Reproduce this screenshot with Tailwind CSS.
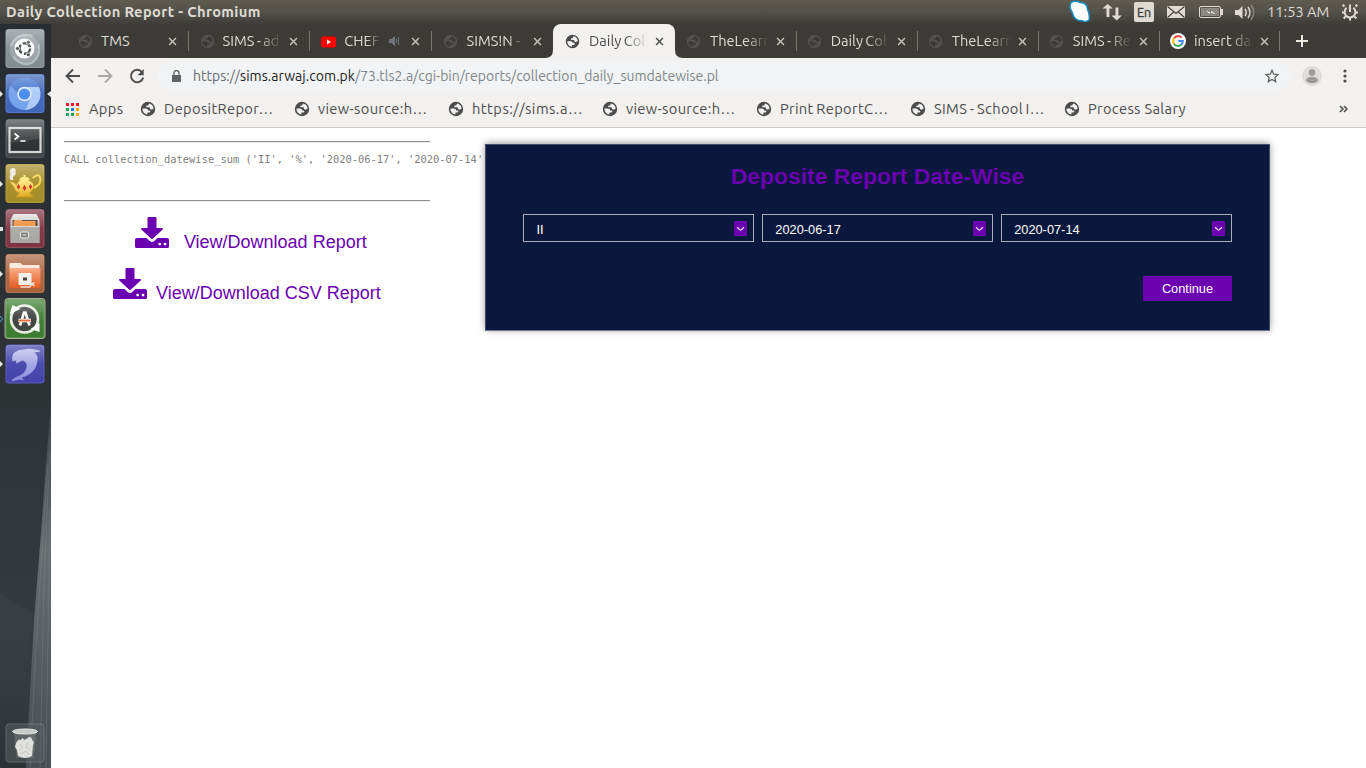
<!DOCTYPE html>
<html lang="en">
<head>
<meta charset="utf-8">
<title>Daily Collection Report</title>
<script src="https://cdn.jsdelivr.net/npm/@tailwindcss/browser@4"></script>
</head>
<body class="w-[1366px] h-[768px] overflow-hidden bg-white flex flex-col font-['Ubuntu','Noto_Sans',sans-serif] text-[14.667px] leading-none">
<svg class="hidden">
  <symbol id="globe" viewBox="0 0 16 16"><path fill="currentColor" fill-rule="evenodd" d="M8 .8a7.2 7.2 0 1 0 0 14.4A7.2 7.2 0 0 0 8 .8zM2.500 7.600h3.200c1.800 0 2.300.7 2.300 1.800h1.200c.8 0 1.100.5 1.100 1.200 0 .6-.4 1-1 1H7.400v1.900C4.400 13.100 2.200 10.600 2.500 7.600zM9.300 2.500C11.800 3 13.500 5 13.600 7.500c-.6.8-1.400 1.100-2.100 1.100-1 0-1.500-.6-1.500-1.400 0-.6-.5-.9-1.200-.9H6.900c-.5-.1-.7-.5-.7-.9 0-.7.4-1 1.100-1h.9c.3-.8.600-1.300 1.100-1.900z"/></symbol>
  <symbol id="close" viewBox="0 0 10 10"><path d="M1.200 1.200l7.600 7.600M8.800 1.200L1.200 8.800" stroke="currentColor" stroke-width="1.700" fill="none"/></symbol>
  <symbol id="download" viewBox="0 0 34 32"><path fill="currentColor" d="M13.500 0h7a1 1 0 0 1 1 1v10h5.500c1 0 1.300 1 .7 1.600L18 21.600c-.6.600-1.400.600-2 0L6.300 12.600C5.700 12 6 11 7 11h5.500V1a1 1 0 0 1 1-1z"/><path fill="currentColor" fill-rule="evenodd" d="M2 21h9.500l3.500 3.200c1.300 1.100 2.700 1.100 4 0L22.500 21H32a2 2 0 0 1 2 2v6.500a1.500 1.500 0 0 1-1.500 1.500h-31A1.500 1.500 0 0 1 0 29.500V23a2 2 0 0 1 2-2zM24.700 25.700a1.400 1.400 0 1 0 0 2.800 1.400 1.400 0 0 0 0-2.800zM30 25.700a1.400 1.400 0 1 0 0 2.800 1.400 1.400 0 0 0 0-2.800z"/></symbol>
  <symbol id="chev" viewBox="0 0 13 15"><path d="M3 6.200l2.800 2.600q.7.500 1.400 0L10 6.200" fill="none" stroke="#e8d8f2" stroke-width="1.300"/></symbol>
</svg>

<!-- system panel -->
<header class="h-6 shrink-0 flex items-center bg-linear-to-b from-[#5e5b4e] via-[#53514a] to-[#3e3d38] text-[#dfdbd2]">
  <span class="ml-[6px] font-bold whitespace-nowrap tracking-[0.37px]">Daily Collection Report - Chromium</span>
  <svg class="ml-auto w-[298px] h-6" viewBox="0 0 298 24">
    <path d="M3 2.500Q7 0 12 2.500q7 0 7.500 7 2.500 5 1.500 10.500-3 2.500-7 .8-8 0-9.500-8-4-5-1.500-10.300z" fill="#fff" stroke="#1690c9" stroke-width="1.500"/>
    <path d="M38.500 17V8.500h-4L39.700 4l5.200 4.500h-3.500V17zM47.500 7.500v8h-4l5.200 5 5.200-5h-3.500v-8z" fill="#dfdbd2"/>
    <rect x="66" y="2" width="20" height="20" rx="2" fill="#dfdbd2"/>
    <rect x="99" y="6" width="18" height="12" fill="#dfdbd2"/><path d="M99.500 6.500l8.500 7 8.500-7M99.500 17.500l6.200-5.500M116.500 17.500l-6.200-5.500" stroke="#45433d" fill="none" stroke-width="1.100"/>
    <rect x="131.500" y="6.500" width="21" height="11" rx="1.500" fill="none" stroke="#dfdbd2"/><path d="M133 8h18v8h-18z" fill="#8d8a82"/><path d="M153 9h2v6h-2z" fill="#dfdbd2"/><path d="M136 9l7 3.500V10l6 5-7-2v2z" fill="#f7f5f0" stroke="#504e47" stroke-width=".5"/>
    <path d="M167 10h3.500l4-4v13l-4-4H167z" fill="#dfdbd2"/><path d="M177 9q2.500 3.500 0 7M180 7q4 5.500 0 11" fill="none" stroke="#dfdbd2" stroke-width="1.500"/><path d="M183 5q5.500 7.500 0 15" fill="none" stroke="#8b887e" stroke-width="1.500"/>
    <g fill="none" stroke="#dfdbd2" stroke-width="2"><path d="M278.700 7.800a5.400 5.400 0 1 0 6.600 0M282 4.500V12"/><path d="M276.500 6.500l-1.800-1.800M287.500 6.500l1.800-1.800M276 12.500h-2M288 12.500h2M277.500 16.500l-1.800 2M286.500 16.500l1.800 2M282 18v2.500"/></g>
    <text x="69" y="17" font-size="12.500" fill="#3c3b37" stroke="#3c3b37" stroke-width=".3">En</text>
    <text x="199" y="17" font-size="14.667" fill="#dfdbd2">11:53 AM</text>
  </svg>
</header>

<div class="flex flex-1 min-h-0">
<!-- launcher -->
<aside class="w-[51px] shrink-0 bg-[#2d3335]">
<svg class="w-[51px] h-[744px]" viewBox="0 24 51 744">
  <defs>
    <linearGradient id="bg" x2="0" y2="1"><stop offset="0" stop-color="#272d30"/><stop offset=".5" stop-color="#2e3436"/><stop offset=".88" stop-color="#363c3f"/><stop offset="1" stop-color="#2d3235"/></linearGradient>
    <linearGradient id="edge" x2="0" y2="1"><stop offset="0" stop-color="#3d4346"/><stop offset=".4" stop-color="#686e70"/><stop offset="1" stop-color="#474d50"/></linearGradient>
    <linearGradient id="gl" x2="0" y2="1"><stop offset="0" stop-color="#fff" stop-opacity=".34"/><stop offset=".5" stop-color="#fff" stop-opacity=".06"/><stop offset="1" stop-color="#fff" stop-opacity=".02"/></linearGradient>
    <linearGradient id="haze" x2="0" y2="1"><stop offset="0" stop-color="#fff" stop-opacity=".03"/><stop offset="1" stop-color="#fff" stop-opacity="0"/></linearGradient>
    <linearGradient id="metal" x2="0" y2="1"><stop offset="0" stop-color="#e2e2df"/><stop offset="1" stop-color="#8e8e8c"/></linearGradient>
    <linearGradient id="orange" x2="0" y2="1"><stop offset="0" stop-color="#f9a37a"/><stop offset="1" stop-color="#e2571c"/></linearGradient>
    <linearGradient id="gold" x2="0" y2="1"><stop offset="0" stop-color="#fff08a"/><stop offset="1" stop-color="#e0a818"/></linearGradient>
    <linearGradient id="dol" x2="0" y2="1"><stop offset="0" stop-color="#b9bbee"/><stop offset="1" stop-color="#8588d6"/></linearGradient>
    <g id="shine"><rect x=".5" y=".5" width="38" height="38" rx="3" fill="url(#gl)" stroke="#fff" stroke-opacity=".14"/></g>
  </defs>
  <rect y="24" width="51" height="744" fill="url(#bg)"/>
  <path d="M51 405Q46 460 42 520L34 620 26 768h25z" fill="url(#edge)"/>
  <path d="M48 465l-7 100-6 100-5 103M50 450l-6 130-4 188M50 510l-4 258" fill="none" stroke="#8a9092" stroke-opacity=".3"/>
  <path d="M0 595q20 8 33 20l-6 60H0z" fill="url(#haze)"/>

  <g transform="translate(5.500 29)"><rect width="39" height="39" rx="3" fill="#7f8b8e"/><circle cx="19" cy="20" r="15" fill="#98a2a4"/><path d="M5 17Q12 3 27 7M33 15q3 12-7 19M8 28q9 11 20 5" stroke="#b4bcbe" stroke-width="2" fill="none"/><circle cx="19" cy="19.500" r="10" fill="#fff"/><circle cx="19.300" cy="19.500" r="5.300" fill="none" stroke="#444c4f" stroke-width="2.500" stroke-dasharray="9 2.100"/><g fill="#444c4f" stroke="#fff" stroke-width=".8"><circle cx="12" cy="19.500" r="2"/><circle cx="22.800" cy="13.200" r="2"/><circle cx="22.800" cy="25.800" r="2"/></g><use href="#shine"/></g>
  <g transform="translate(5.500 74)"><rect width="39" height="39" rx="3" fill="#3a63b8"/><circle cx="19" cy="20" r="16" fill="#6f9fec"/><path d="M19 20V13h14.500Q36 19 34 26q-4 9-14 10l5-12z" fill="#a9c8f8"/><path d="M5 12Q10 4 19 4q10 0 14.500 9H19q-6 0-7 6z" fill="#4275d0"/><circle cx="19" cy="20" r="7.300" fill="#dce9fd"/><circle cx="19" cy="20" r="5.600" fill="#4285ee"/><use href="#shine"/></g>
  <g transform="translate(5.500 119)"><rect width="39" height="39" rx="3" fill="#3c4043"/><rect x="4" y="9" width="31" height="24" fill="#26292b" stroke="#d4d5d3" stroke-width="2.200"/><path d="M5 10h29v10L5 24z" fill="#fff" opacity=".1"/><path d="M9 14.500l4 3-4 3M15 22h5" stroke="#fff" stroke-width="1.600" fill="none"/><use href="#shine"/></g>
  <g transform="translate(5.500 164)"><rect width="39" height="39" rx="3" fill="#a38a23"/><path d="M27 14q7-6 8 1 0 7-8 9" fill="none" stroke="#f5d248" stroke-width="2"/><path d="M4 18q4-1 7 3l2-4q5-4 12 0l3 3q1 6-4 9l4 4H10l4-4q-4-1-5-4-1-4-5-7z" fill="url(#gold)" stroke="#c38e10" stroke-width=".7"/><path d="M14 16q0-3 4-3v-2h2v2q4 0 4 3z" fill="#ffe878"/><path d="M5 16q-2-3 0-6-2-5 2-6 4 0 3 4 1 3-2 4-1 2 0 4z" fill="#eee" opacity=".9"/><path d="M13 20l1.600 2.700-1.600 2.700-1.600-2.700zM19 21l1.800 3-1.800 3-1.800-3zM25 20l1.600 2.700-1.600 2.700-1.600-2.700z" fill="#d4201d"/><use href="#shine"/></g>
  <g transform="translate(5.500 209)"><rect width="39" height="39" rx="3" fill="#7c2f3f"/><path d="M8 5h23l3 6v23H5V11z" fill="url(#metal)"/><path d="M7 11h25v7H7z" fill="#3e2a22"/><path d="M8 13l1-2h7l1 1h13v6H8z" fill="#f08c38"/><path d="M5 17h29v17H5z" fill="#a5a5a2"/><path d="M5 17.500h29" stroke="#d9d9d6"/><rect x="15" y="23" width="8" height="6" rx="1" fill="#777" stroke="#eee"/><path d="M17 26h4" stroke="#eee"/><use href="#shine"/></g>
  <g transform="translate(5.500 254)"><rect width="39" height="39" rx="3" fill="#a9603a"/><path d="M4 10q0-1 1-1h10l2 2h17v4H4z" fill="#fbe5d8"/><path d="M4 14h31v18q0 2-2 2H6q-2 0-2-2z" fill="url(#orange)"/><rect x="13" y="19" width="13" height="12" rx="1" fill="#f2efea"/><rect x="17.500" y="23.500" width="4" height="3" fill="#3b3530"/><path d="M15 33h9q3-4 5-1M24 30l5-1" stroke="#e9e4dd" stroke-width="1.500" fill="none"/><use href="#shine"/></g>
  <g transform="translate(5.500 299)"><rect x="-1" y="-1" width="41" height="41" rx="4" fill="#dfe5c8" opacity=".7"/><rect width="39" height="39" rx="3" fill="#377a2b"/><circle cx="19" cy="20" r="12" fill="#3b3d3b"/><circle cx="19" cy="20" r="13.500" fill="none" stroke="#ecece6" stroke-width="2.600"/><path d="M4 15l3-9 8 4zM34 24v9l-9-3z" fill="#fff"/><path d="M14.500 26.500l4-13h1.500l4 13" fill="none" stroke="#f6f6f2" stroke-width="2.600"/><path d="M13 21.500h12.500" stroke="#f6f6f2" stroke-width="3.600"/><path d="M13.500 21.500h11.500" stroke="#e8632a" stroke-width="1.800"/><use href="#shine"/></g>
  <g transform="translate(5.500 344.500)"><rect width="39" height="39" rx="3" fill="#3e40a9"/><path d="M8 9q4-4 10-4 6-2 16 1l1 1-6 1q4 3 3 8-1 8-6 12-4 4-10 5l3 3-5-1-8 2q1-3 6-5 8-3 9-9 1-4-2-6l-2-1-6 3-1-3-3 1q-1-5 1-8z" fill="url(#dol)"/><use href="#shine"/></g>
  <g transform="translate(6 724)"><rect width="38" height="38" rx="3" fill="#5a6062" opacity=".55" stroke="#888d8f"/><path d="M8 9h22l-2.500 25h-17z" fill="#9a9d9b" opacity=".3"/><path d="M10 19q3-5 5-3 2-4 3 0 3-1 5-3 3 0 3 3 3 2 1 5l-1 11q-7 4-14 0l-1-6-2-3z" fill="#dfe0dd"/><path d="M14 20l3 3-3 3M22 18l-2 5 4 3M15 30l5-3 3 4" stroke="#c6c8c6" fill="none"/><ellipse cx="19" cy="7.500" rx="12.500" ry="2.500" fill="#c9cbc8" stroke="#e8e9e6"/></g>
  <path d="M0 91l3 3-3 3zM0 181l3 3-3 3zM0 271l3 3-3 3zM0 361l3 3-3 3zM51 91l-4 3 4 3zM0 227h3v4H0z" fill="#e4e4e0"/>
  <path d="M0 316l2.500 3L0 322" fill="none" stroke="#5da6cf"/>
</svg>
</aside>

<div class="flex-1 min-w-0 flex flex-col">
<!-- tabs -->
<nav class="h-[34px] shrink-0 bg-[#3c3b37] flex items-stretch pl-4 text-[#dfdbd2]">
  <div class="w-[120.500px] flex items-center pl-[11px] pr-[11px] relative"><svg class="w-[15px] h-[15px] text-[#53524f]"><use href="#globe"/></svg><span class="ml-2 w-[59px] overflow-hidden whitespace-nowrap h-5 leading-5">TMS</span><svg class="w-[9px] h-[9px] ml-[7.500px] text-[#c3c0b8]"><use href="#close"/></svg></div>
  <div class="w-[121.850px] flex items-center pl-[12px] relative"><i class="absolute left-0 top-[7px] w-px h-5 bg-[#77756f]"></i><svg class="w-[15px] h-[15px] text-[#53524f]"><use href="#globe"/></svg><span class="ml-2 w-[59px] overflow-hidden whitespace-nowrap h-5 leading-5 [word-spacing:-1px] mask-r-from-60% mask-r-to-100%">SIMS - ad</span><svg class="w-[9px] h-[9px] ml-[7px] text-[#c3c0b8]"><use href="#close"/></svg></div>
  <div class="w-[121.650px] flex items-center pl-[12px] relative"><i class="absolute left-0 top-[7px] w-px h-5 bg-[#77756f]"></i><svg class="w-[15px] h-[15px]" viewBox="0 0 15 15"><rect y="2.500" width="15" height="11" rx="2.500" fill="#f00"/><path d="M6 5.500l4 2.500-4 2.500z" fill="#fff"/></svg><span class="ml-2 w-[37px] overflow-hidden whitespace-nowrap h-5 leading-5 mask-r-from-60% mask-r-to-100%">CHEF</span><svg class="w-3 h-3 ml-[8px]" viewBox="0 0 12 12"><path d="M0 4h2.500L6 1v10L2.500 8H0z" fill="#6f757a"/><path d="M7.500 4v4M9.500 2v8" stroke="#6f757a"/></svg><svg class="w-[9px] h-[9px] ml-[10px] text-[#c3c0b8]"><use href="#close"/></svg></div>
  <div class="w-[122px] flex items-center pl-[12.500px] relative"><i class="absolute left-0 top-[7px] w-px h-5 bg-[#77756f]"></i><svg class="w-[15px] h-[15px] text-[#53524f]"><use href="#globe"/></svg><span class="ml-2 w-[59px] overflow-hidden whitespace-nowrap h-5 leading-5 mask-r-from-70% mask-r-to-100%">SIMS!N -</span><svg class="w-[9px] h-[9px] ml-[8px] text-[#c3c0b8]"><use href="#close"/></svg></div>
  <div class="w-[122px] flex items-center pl-[12.500px] relative bg-[#f2f1f0] rounded-t-lg text-[#4c4c4c]"><svg class="absolute -left-2 bottom-0 w-2 h-2" viewBox="0 0 8 8"><path d="M8 0v8H0q8 0 8-8z" fill="#f2f1f0"/></svg><svg class="absolute -right-2 bottom-0 w-2 h-2" viewBox="0 0 8 8"><path d="M0 0v8h8Q0 8 0 0z" fill="#f2f1f0"/></svg><svg class="w-[15px] h-[15px]"><use href="#globe"/></svg><span class="ml-[8.500px] w-[59px] overflow-hidden whitespace-nowrap h-5 leading-5 [word-spacing:-1px] mask-r-from-60% mask-r-to-100%">Daily Col</span><svg class="w-[9px] h-[9px] ml-[7.500px]"><use href="#close"/></svg></div>
  <div class="w-[120.700px] flex items-center pl-[11.500px] relative"><svg class="w-[15px] h-[15px] text-[#53524f]"><use href="#globe"/></svg><span class="ml-[8.500px] w-[59px] overflow-hidden whitespace-nowrap h-5 leading-5 mask-r-from-60% mask-r-to-100%">TheLearn</span><svg class="w-[9px] h-[9px] ml-[7px] text-[#c3c0b8]"><use href="#close"/></svg></div>
  <div class="w-[121.100px] flex items-center pl-[11.500px] relative"><i class="absolute left-0 top-[7px] w-px h-5 bg-[#77756f]"></i><svg class="w-[15px] h-[15px] text-[#53524f]"><use href="#globe"/></svg><span class="ml-[8.500px] w-[59px] overflow-hidden whitespace-nowrap h-5 leading-5 [word-spacing:-1px] mask-r-from-60% mask-r-to-100%">Daily Col</span><svg class="w-[9px] h-[9px] ml-[7px] text-[#c3c0b8]"><use href="#close"/></svg></div>
  <div class="w-[121.100px] flex items-center pl-[11.500px] relative"><i class="absolute left-0 top-[7px] w-px h-5 bg-[#77756f]"></i><svg class="w-[15px] h-[15px] text-[#53524f]"><use href="#globe"/></svg><span class="ml-[8.500px] w-[59px] overflow-hidden whitespace-nowrap h-5 leading-5 mask-r-from-60% mask-r-to-100%">TheLearn</span><svg class="w-[9px] h-[9px] ml-[7px] text-[#c3c0b8]"><use href="#close"/></svg></div>
  <div class="w-[121.100px] flex items-center pl-[11.500px] relative"><i class="absolute left-0 top-[7px] w-px h-5 bg-[#77756f]"></i><svg class="w-[15px] h-[15px] text-[#53524f]"><use href="#globe"/></svg><span class="ml-[8.500px] w-[59px] overflow-hidden whitespace-nowrap h-5 leading-5 [word-spacing:-1px] mask-r-from-60% mask-r-to-100%">SIMS - Re</span><svg class="w-[9px] h-[9px] ml-[7px] text-[#c3c0b8]"><use href="#close"/></svg></div>
  <div class="w-[120.500px] flex items-center pl-[11.500px] relative"><i class="absolute left-0 top-[7px] w-px h-5 bg-[#77756f]"></i><svg class="w-4 h-4 -mr-px" viewBox="0 0 16 16"><circle cx="8" cy="8" r="8" fill="#fff"/><g fill="none" stroke-width="2"><path d="M11.500 4.600A4.800 4.800 0 0 0 4 5.300" stroke="#ea4335"/><path d="M4 5.300a4.800 4.800 0 0 0 0 5.400" stroke="#fbbc05"/><path d="M4 10.700a4.800 4.800 0 0 0 7.200 1" stroke="#34a853"/><path d="M11.200 11.700A4.800 4.800 0 0 0 12.800 8H8.300" stroke="#4285f4"/></g></svg><span class="ml-[8.500px] w-[59px] overflow-hidden whitespace-nowrap h-5 leading-5 mask-r-from-60% mask-r-to-100%">insert da</span><svg class="w-[9px] h-[9px] ml-[7px] text-[#c3c0b8]"><use href="#close"/></svg></div>
  <div class="flex-1 flex items-center pl-[17px] relative"><i class="absolute left-0 top-[7px] w-px h-5 bg-[#77756f]"></i><svg class="w-3 h-3" viewBox="0 0 12 12"><path d="M6 0v12M0 6h12" stroke="#ece9e0" stroke-width="2"/></svg></div>
</nav>

<!-- address row -->
<div class="h-[35px] shrink-0 bg-[#f2f1f0] flex items-center pl-[14px] text-[#4c4c4c]">
  <svg class="w-4 h-4" viewBox="0 0 16 16"><path d="M15 8H2M8 1.500L1.500 8 8 14.500" fill="none" stroke="currentColor" stroke-width="1.800"/></svg>
  <svg class="w-4 h-4 ml-4 text-[#aaa9a8]" viewBox="0 0 16 16"><path d="M1 8h13M8 1.500L14.500 8 8 14.500" fill="none" stroke="currentColor" stroke-width="1.800"/></svg>
  <svg class="w-4 h-4 ml-4" viewBox="0 0 16 16"><path d="M13 4.100A6.200 6.200 0 1 0 14.200 9.500" fill="none" stroke="currentColor" stroke-width="1.900"/><path d="M14.700 1v6.200H8.500z" fill="currentColor"/></svg>
  <div class="ml-[13px] w-[1132px] h-7 rounded-full bg-[#f1f3f4] flex items-center pl-[14px] pr-[11px]">
    <svg class="w-[9px] h-3" viewBox="0 0 9 12"><path d="M0 5h9v7H0z" fill="#5f6368"/><path d="M2 5V3a2.500 2.500 0 0 1 5 0v2" fill="none" stroke="#5f6368" stroke-width="1.300"/></svg>
    <span class="ml-3 pt-px whitespace-nowrap text-[#80868b] text-[14px]"><span class="text-[#6a6f74]">https://</span><span class="text-[#202124] tracking-[0.05px]">sims.arwaj.com.pk</span>/73.tls2.a/cgi-bin/reports/collection_daily_sumdatewise.pl</span>
    <svg class="ml-auto w-[14px] h-[14px]" viewBox="0 0 14 14"><path d="M7 1.300l1.700 3.900 4.300.4-3.200 2.800.9 4.200L7 10.400l-3.700 2.200.9-4.200L1 5.600l4.300-.4z" fill="none" stroke="#5f6368" stroke-width="1.300"/></svg>
  </div>
  <svg class="ml-[12px] w-5 h-5" viewBox="0 0 20 20"><circle cx="10" cy="10" r="10" fill="#dedddc"/><circle cx="10" cy="6.500" r="3.200" fill="#9b9a99"/><ellipse cx="10" cy="14" rx="6" ry="3.300" fill="#9b9a99"/></svg>
  <svg class="ml-[20.500px] w-1 h-4" viewBox="0 0 4 16"><circle cx="2" cy="3" r="1.600" fill="#4c4c4c"/><circle cx="2" cy="8" r="1.600" fill="#4c4c4c"/><circle cx="2" cy="13" r="1.600" fill="#4c4c4c"/></svg>
</div>

<!-- bookmarks -->
<div class="h-[35px] shrink-0 bg-[#f2f1f0] border-b border-[#cbcac9] flex items-center pl-[15px] pb-[2px] text-[#4c4c4c] whitespace-nowrap tracking-[0.33px]">
  <svg class="w-[13px] h-[13px]" viewBox="0 0 13 13"><path d="M0 0h3v3H0zM5 0h3v3H5zM10 0h3v3h-3z" fill="#f0142c"/><path d="M0 5h3v3H0zM0 10h3v3H0zM5 10h3v3H5z" fill="#14a05a"/><path d="M5 5h3v3H5z" fill="#1a73e8"/><path d="M10 5h3v3h-3zM10 10h3v3h-3z" fill="#fba810"/></svg>
  <span class="ml-[10px] w-[51px] pt-px">Apps</span>
  <div class="w-[154px] flex items-center"><svg class="w-4 h-4"><use href="#globe"/></svg><span class="ml-2 pt-px">DepositRepor…</span></div>
  <div class="w-[154px] flex items-center"><svg class="w-4 h-4"><use href="#globe"/></svg><span class="ml-2 pt-px">view-source:h…</span></div>
  <div class="w-[154px] flex items-center"><svg class="w-4 h-4"><use href="#globe"/></svg><span class="ml-2 pt-px tracking-[0.48px]">https://sims.a…</span></div>
  <div class="w-[154px] flex items-center"><svg class="w-4 h-4"><use href="#globe"/></svg><span class="ml-2 pt-px">view-source:h…</span></div>
  <div class="w-[154px] flex items-center"><svg class="w-4 h-4"><use href="#globe"/></svg><span class="ml-2 pt-px [word-spacing:-1px]">Print ReportC…</span></div>
  <div class="w-[154px] flex items-center"><svg class="w-4 h-4"><use href="#globe"/></svg><span class="ml-2 pt-px [word-spacing:-1px]">SIMS - School I…</span></div>
  <div class="w-[154px] flex items-center"><svg class="w-4 h-4"><use href="#globe"/></svg><span class="ml-2 pt-px">Process Salary</span></div>
  <svg class="ml-auto mr-[18px] w-[9px] h-2" viewBox="0 0 9 8"><path d="M1 1l3 3-3 3M5 1l3 3-3 3" stroke="#4c4c4c" stroke-width="1.500" fill="none"/></svg>
</div>

<!-- page -->
<main class="flex-1 flex items-start pl-[13px] font-['Liberation_Sans',Arial,sans-serif]">
  <section class="w-[366px] shrink-0 pt-[13px] text-[#6a00b0]">
    <hr class="h-[2px] border-0 border-t border-[#8f8f8f] bg-[#ededed]">
    <pre class="mt-[9px] h-[48px] text-[10.400px] leading-[14px] text-[#808080] font-['DejaVu_Sans_Mono',monospace]">CALL collection_datewise_sum ('II', '%', '2020-06-17', '2020-07-14')</pre>
    <hr class="h-[2px] border-0 border-t border-[#8f8f8f] bg-[#ededed]">
    <a class="mt-[15px] ml-[71.400px] flex items-end h-8 text-[18px]"><svg class="w-[34px] h-8"><use href="#download"/></svg><span class="ml-[14.500px] leading-[14px] whitespace-nowrap">View/Download Report</span></a>
    <a class="mt-[19px] ml-[49px] flex items-end h-8 text-[18px]"><svg class="w-[34px] h-8"><use href="#download"/></svg><span class="ml-[9px] leading-[14px] whitespace-nowrap">View/Download CSV Report</span></a>
  </section>
  <section class="relative ml-[55px] mt-4 w-[785px] h-[187px] bg-[#0a183d] border border-[#454e68] border-b-[#6e7588] shadow-[0_-1px_7px_rgba(0,0,0,0.4)] px-[37px]">
    <h1 class="mt-[17px] h-[28px] leading-[28px] text-center font-bold text-[22.900px] text-[#6a00b0] whitespace-nowrap">Deposite Report Date-Wise</h1>
    <div class="mt-[24px] flex gap-2 text-[12.800px] text-white">
      <div class="flex-1 h-7 border border-[#a9adb8] flex items-center justify-between pl-[12.500px] pr-[6px]"><span class="pt-[5px]">II</span><svg class="w-[13px] h-[15px] bg-[#6a00b0]"><use href="#chev"/></svg></div>
      <div class="flex-1 h-7 border border-[#a9adb8] flex items-center justify-between pl-[12px] pr-[6px]"><span class="pt-[5px]">2020-06-17</span><svg class="w-[13px] h-[15px] bg-[#6a00b0]"><use href="#chev"/></svg></div>
      <div class="flex-1 h-7 border border-[#a9adb8] flex items-center justify-between pl-[12px] pr-[6px]"><span class="pt-[5px]">2020-07-14</span><svg class="w-[13px] h-[15px] bg-[#6a00b0]"><use href="#chev"/></svg></div>
    </div>
    <div class="mt-[34px] flex justify-end"><button class="w-[89px] h-[25px] pt-[2px] bg-[#6a00b0] text-white text-[12.800px]">Continue</button></div>
  </section>
</main>
</div>
</div>
</body>
</html>
